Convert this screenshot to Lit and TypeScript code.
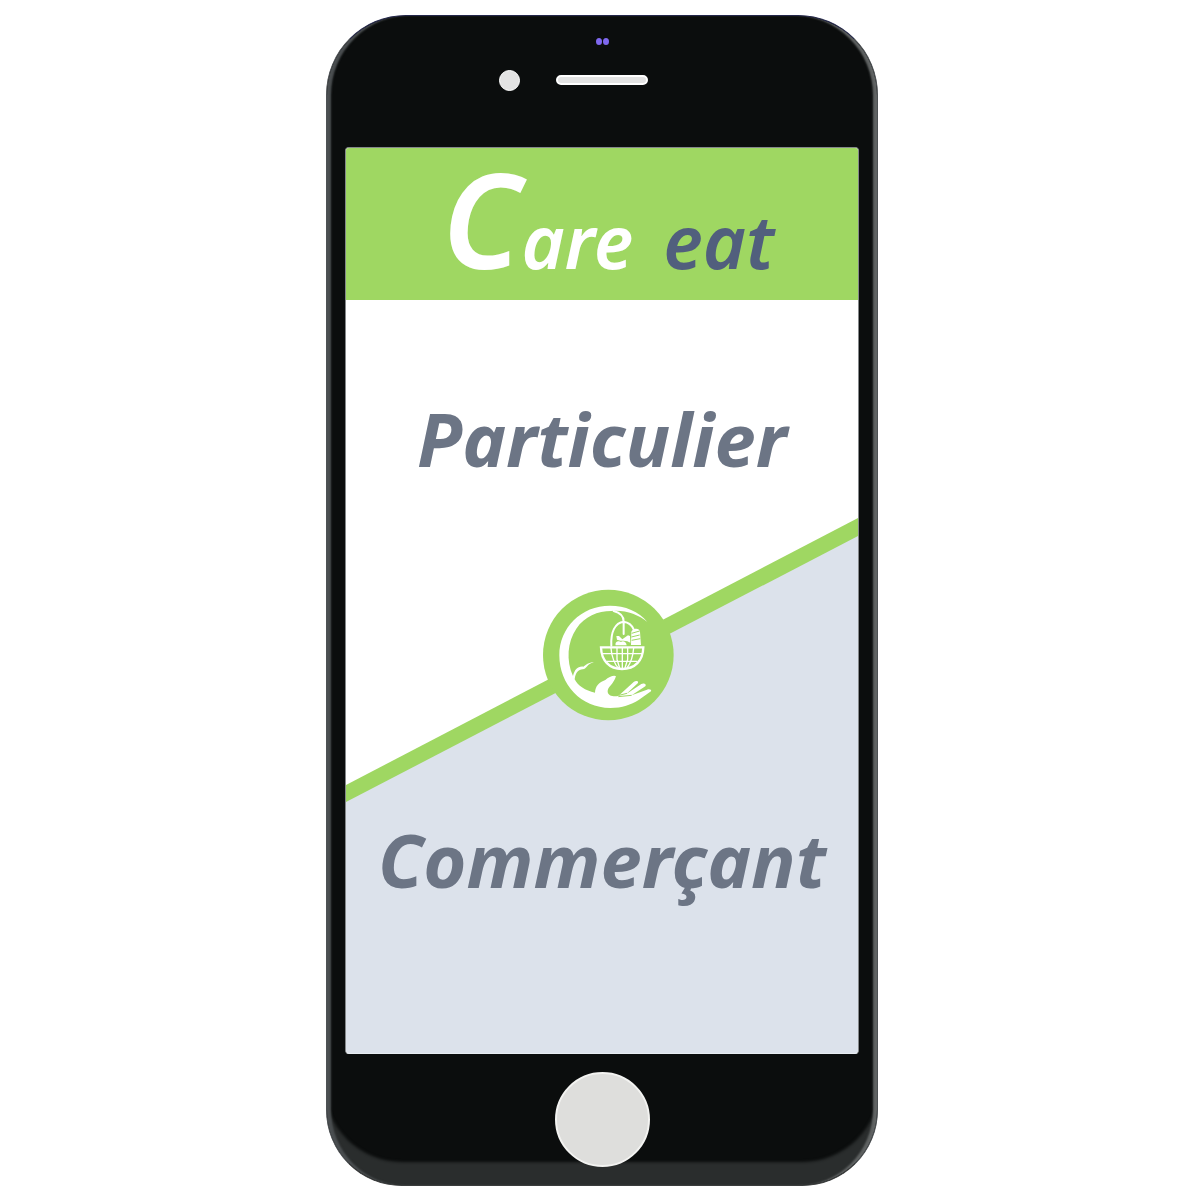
import { LitElement, html, svg, css } from "lit";
import { customElement } from "lit/decorators.js";

/** Round emblem: a crescent that ends in an open hand, holding a basket. */
const emblem = svg`
  <g transform="translate(189 280) scale(0.3333)">
    <circle cx="220" cy="225" r="196" fill="#9fd762" />
    <path fill="#fff" d="M337 126C312 94 270 77 225 77C138 77 73 143 73 226C73 314 138 384 226 384C262 384 288 374 311 360L348 334C351 329 343 326 336 329L290 346L331 319C336 312 326 308 319 312L274 342L309 309C311 301 301 302 296 306L250 348C233 351 219 346 218 335C217 321 236 313 243 289C238 284 221 291 211 300C192 307 181 318 180 338C151 332 128 317 119 298C122 277 130 269 143 268C157 267 154 252 177 247C160 247 153 255 145 260C128 258 119 269 114 288C93 242 97 185 124 146C149 109 188 93 229 93C270 89 309 103 337 126Z" />
    <path stroke="#9fd762" stroke-width="3" fill="none" d="M250 350L290 346M252 346L276 340" />
    <g fill="none" stroke="#fff" stroke-width="6" stroke-linecap="round">
      <path d="M236 93C256 98 266 110 266 125C240 128 227 156 229 197M266 125C282 127 291 136 296 148M266 125V162" />
      <path stroke-width="7" d="M198 202H325C324 242 300 267 261 267C223 267 199 242 198 202Z" />
      <path stroke-width="4" d="M203 221H320M216 244H305M228 204C229 228 240 255 250 264M246 204V238L254 264M262 204V265M278 204V238L270 264M296 204C294 230 285 252 276 264" />
    </g>
    <path fill="#fff" d="M289 158C288 146 313 140 315 155L318 195H288ZM242 196C239 184 252 181 258 186C263 181 274 185 275 196ZM244 168L252 168L262 178L279 166L285 168L286 188L277 184L266 182L256 182L246 179Z" />
    <path stroke="#9fd762" stroke-width="3" fill="none" d="M290 160L314 153M289 171L314 165M290 181L316 176" />
  </g>
`;

@customElement("app-root")
export class AppRoot extends LitElement {
  static styles = css`
    :host {
      display: flex;
      justify-content: center;
      align-items: flex-start;
      box-sizing: border-box;
      padding: 15px 0 15px 4px;
      background: #fff;
      font-family: "Noto Sans", "Open Sans", sans-serif;
    }
    * {
      box-sizing: border-box;
    }
    .phone {
      width: 100%;
      max-width: 552px;
      padding: 0 18px;
      border: 1px solid #4d5154;
      border-top-color: #23264a;
      border-bottom-color: #3a3c3c;
      border-radius: 80px 80px 76px 76px;
      background: #0b0d0d;
      box-shadow: inset 5px 0 2px -1px #4b4f51, inset -5px 0 2px -1px #606363,
        inset 0 -26px 3px -3px #2a2d2d;
    }
    .top {
      display: grid;
      grid-template-columns: 1fr 92px 1fr;
      grid-template-rows: 29px 10px;
      row-gap: 30px;
      align-items: end;
      justify-items: center;
      height: 131px;
    }
    .sensors {
      grid-column: 2;
      display: flex;
      gap: 1px;
    }
    .sensor {
      width: 6px;
      height: 7px;
      border-radius: 50%;
      background: #7f68ef;
    }
    .camera {
      grid-column: 1;
      grid-row: 2;
      align-self: center;
      justify-self: end;
      width: 21px;
      height: 21px;
      margin-right: 36px;
      border: 1px solid #fff;
      border-radius: 50%;
      background: #e3e3e3;
    }
    .speaker {
      grid-column: 2;
      grid-row: 2;
      width: 100%;
      height: 10px;
      border: 2px solid #fff;
      border-radius: 5px;
      background: #e3e3e3;
    }
    .screen {
      border: 1px solid #85888a;
      border-bottom-color: #e8edf2;
      border-radius: 4px;
      background: #fff;
    }
    .brand {
      display: flex;
      align-items: baseline;
      justify-content: center;
      height: 152px;
      margin: 0;
      padding: 2px 0 0 12px;
      border-radius: 3px 3px 0 0;
      background: #9fd762;
      font-size: 74px;
      font-style: italic;
      font-weight: 600;
      line-height: 88px;
      color: #fff;
    }
    .initial {
      font-size: 132px;
      line-height: 136px;
    }
    .eat {
      margin-left: 30px;
      color: #515f7d;
    }
    .choices {
      display: grid;
      grid-template-rows: 278fr 88fr 387fr;
      grid-template-columns: 100%;
    }
    .split {
      grid-area: 1 / 1 / -1 / -1;
      display: block;
      width: 100%;
      border-radius: 0 0 3px 3px;
    }
    .choice {
      z-index: 1;
      grid-column: 1;
      padding: 0;
      border: 0;
      background: none;
      color: #6c7585;
      font: italic 700 74px/88px "Noto Sans", "Open Sans", sans-serif;
      cursor: pointer;
    }
    .personal {
      grid-row: 1;
    }
    .business {
      grid-row: 3;
    }
    .bottom {
      display: flex;
      justify-content: center;
      height: 131px;
      padding: 18px 0 0;
    }
    .home {
      width: 95px;
      height: 95px;
      padding: 0;
      border: 2px solid #f3f3f1;
      border-radius: 50%;
      background: #dededc;
    }
  `;

  render() {
    return html`
      <main class="phone">
        <div class="top">
          <div class="sensors"><i class="sensor"></i><i class="sensor"></i></div>
          <div class="camera"></div>
          <div class="speaker"></div>
        </div>
        <div class="screen">
          <h1 class="brand">
            <span><span class="initial">C</span>are</span><span class="eat">eat</span>
          </h1>
          <nav class="choices">
            <svg class="split" viewBox="0 0 512 753" aria-hidden="true">
              <path fill="#dce2eb" d="M0 493L512 227V753H0Z" />
              <path fill="#9fd762" d="M0 485L512 218V236L0 502Z" />
              ${emblem}
            </svg>
            <button class="choice personal" type="button">Particulier</button>
            <button class="choice business" type="button">Commerçant</button>
          </nav>
        </div>
        <div class="bottom">
          <button class="home" type="button" aria-label="Home"></button>
        </div>
      </main>
    `;
  }
}
